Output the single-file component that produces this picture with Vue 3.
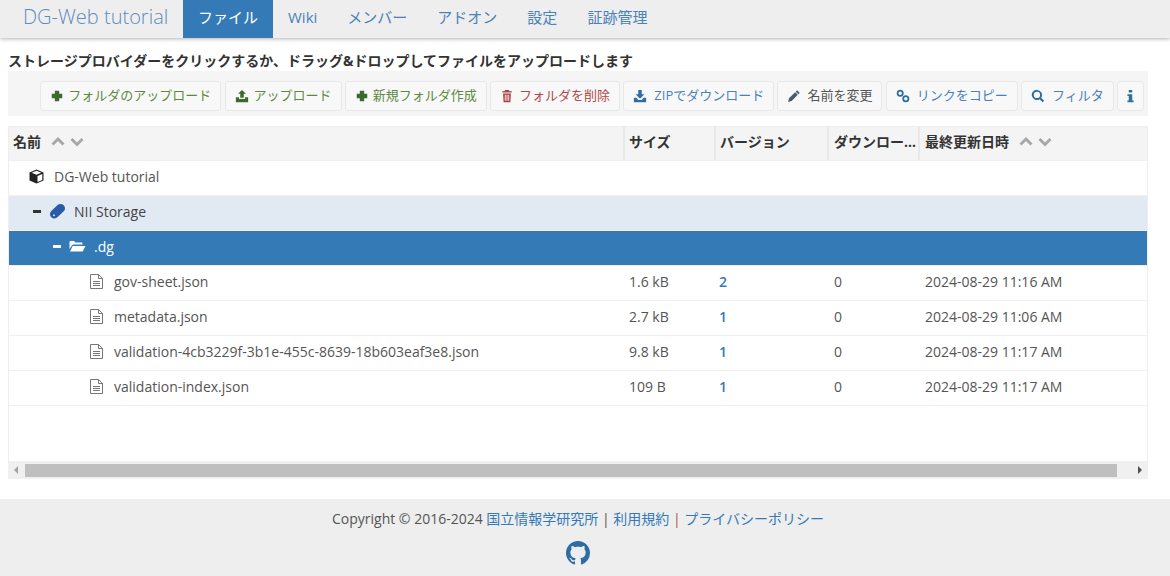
<template>
  <div class="page">
    <nav class="navbar">
      <a class="brand">DG-Web tutorial</a>
      <ul class="tabs">
        <li v-for="tab in tabs" :key="tab" :class="{ active: tab === 'ファイル' }">{{ tab }}</li>
      </ul>
    </nav>

    <main class="content">
      <p class="hint">ストレージプロバイダーをクリックするか、ドラッグ&amp;ドロップしてファイルをアップロードします</p>

      <div class="toolbar">
        <button v-for="btn in buttons" :key="btn.icon + btn.label" class="btn" :class="btn.kind">
          <svg
            class="btn-icon"
            :class="{ narrow: !btn.label }"
            :viewBox="btn.label ? '0 0 16 16' : '4 0 8 16'"
            :style="{ marginRight: btn.gap + 'px' }"
            aria-hidden="true"
          >
            <path :d="icons[btn.icon]" fill="currentColor" fill-rule="evenodd" />
          </svg>
          <span v-if="btn.label" class="btn-label">{{ btn.label }}</span>
        </button>
      </div>

      <section class="grid">
        <div class="row head">
          <div class="cell name">
            <b>名前</b>
            <svg class="sort" viewBox="0 0 32 12" aria-hidden="true">
              <path d="M1 9.500 6.500 4 12 9.500M20 4l5.500 5.500L31 4" fill="none" stroke="#a8a8a8" stroke-width="3" />
            </svg>
          </div>
          <div class="cell"><b>サイズ</b></div>
          <div class="cell"><b>バージョン</b></div>
          <div class="cell"><b class="clip">ダウンロード数</b></div>
          <div class="cell">
            <b>最終更新日時</b>
            <svg class="sort" viewBox="0 0 32 12" aria-hidden="true">
              <path d="M1 9.500 6.500 4 12 9.500M20 4l5.500 5.500L31 4" fill="none" stroke="#a8a8a8" stroke-width="3" />
            </svg>
          </div>
        </div>

        <div class="body">
          <div v-for="item in rows" :key="item.name" class="row" :class="item.kind">
            <div class="cell name" :class="'indent-' + item.depth">
              <span class="toggle"><i v-if="item.open"></i></span>
              <svg v-if="item.icon === 'cube'" class="tree-icon" viewBox="0 0 17 17" aria-hidden="true">
                <path d="M7.500 1.500 14.500 4.500v8L7.500 15.500.5 12.500v-8z" fill="#222" />
                <path d="M7.500 2.800 12.300 4.800 7.500 6.700 2.700 4.800zM8.500 8l4.800-2v6L8.500 14.100z" fill="#fff" />
              </svg>
              <svg v-else-if="item.icon === 'storage'" class="tree-icon" viewBox="0 0 17 17" aria-hidden="true">
                <path d="M11.500 1c2.500 0 4.500 1.900 4.500 4.200 0 1.200-.5 2.300-1.300 3l-6 5.900C7.800 15 6.700 15.500 5.400 15.500 2.900 15.500 1 13.600 1 11.200c0-1.200.5-2.300 1.300-3.100l6-5.800C9.200 1.500 10.300 1 11.500 1z" fill="#2a5aa8" />
                <circle cx="5" cy="12.300" r=".9" fill="#fff" />
              </svg>
              <svg v-else-if="item.icon === 'folder'" class="tree-icon" viewBox="0 0 17 17" aria-hidden="true">
                <path d="M.5 4c0-.5.5-1 1-1h3.700l1 1.500h6.300c.5 0 1 .5 1 1v1H4.700c-.8 0-1.400.4-1.800 1L.5 11zM3.700 8H16.500l-2.800 5.500H1z" fill="#fff" />
              </svg>
              <svg v-else class="tree-icon file" viewBox="0 0 17 17" aria-hidden="true">
                <path d="M1.500 1.500h8L13.500 5.500v10h-12zM9.500 1.500v4h4M4 8.500h7M4 10.500h7M4 12.500h7" fill="none" stroke="#777" stroke-width="1" />
              </svg>
              <span class="label">{{ item.name }}</span>
            </div>
            <div class="cell">{{ item.size }}</div>
            <div class="cell version">{{ item.version }}</div>
            <div class="cell">{{ item.downloads }}</div>
            <div class="cell">{{ item.modified }}</div>
          </div>
        </div>

        <div class="scrollbar">
          <span class="arrow left"></span>
          <div class="thumb"></div>
          <span class="arrow right"></span>
        </div>
      </section>
    </main>

    <footer class="footer">
      <p>
        Copyright © 2016-2024 <a>国立情報学研究所</a> | <a>利用規約</a> <span class="sep">|</span> <a>プライバシーポリシー</a>
      </p>
      <svg class="github" viewBox="0 0 16 16" aria-hidden="true">
        <path fill="#2f6ca3" d="M8 0C3.580 0 0 3.580 0 8c0 3.540 2.290 6.530 5.470 7.590.4.070.550-.170.550-.380 0-.190-.010-.820-.010-1.490-2.010.370-2.530-.490-2.690-.940-.090-.230-.480-.940-.820-1.130-.280-.150-.680-.520-.010-.530.630-.010 1.080.580 1.230.820.720 1.210 1.870.870 2.330.660.070-.520.280-.870.510-1.070-1.780-.2-3.640-.890-3.640-3.950 0-.870.310-1.590.820-2.150-.080-.2-.360-1.020.080-2.120 0 0 .670-.210 2.200.820.640-.180 1.320-.270 2-.270s1.360.090 2 .270c1.530-1.040 2.200-.820 2.200-.820.440 1.100.160 1.920.080 2.120.510.560.820 1.270.820 2.150 0 3.070-1.870 3.750-3.650 3.950.290.250.540.730.540 1.480 0 1.070-.010 1.930-.010 2.200 0 .210.150.460.550.380A8.013 8.013 0 0 0 16 8c0-4.420-3.580-8-8-8z" />
      </svg>
    </footer>
  </div>
</template>

<script setup>
const tabs = ['ファイル', 'Wiki', 'メンバー', 'アドオン', '設定', '証跡管理'];

const icons = {
  plus: 'M5.500 2h5v3.500H14v5h-3.500V14h-5v-3.500H2v-5h3.500z',
  upload: 'M8 1l4.500 4.500H10V10H6V5.500H3.500zM1 9.500h3.500V11.500h7V9.500H15V15H1z',
  download: 'M6 1h4v5h3L8 11 3 6h3zM1 10h3l2 2.500h4l2-2.500h3v5H1z',
  trash: 'M6 1h4l1 1.500h2.500V4h-11V2.500H5zM3.500 5h9l-.6 10H4.100zM5.500 6.500v7h1v-7zM7.500 6.500v7h1v-7zM9.500 6.500v7h1v-7z',
  pencil: 'M11.500 1.500l3 3L13 6l-3-3zM9.300 3.700l3 3-7 7-4 1.100 1-4.100z',
  link: 'M4.800.8a4 4 0 1 0 0 8 4 4 0 0 0 0-8zm0 2a2 2 0 1 1 0 4 2 2 0 0 1 0-4zM11.200 7.200a4 4 0 1 0 0 8 4 4 0 0 0 0-8zm0 2a2 2 0 1 1 0 4 2 2 0 0 1 0-4z',
  search: 'M6.800 1a5.800 5.800 0 0 1 4.800 9l3.400 3.400-1.700 1.600-3.400-3.400A5.800 5.800 0 1 1 6.800 1zm0 2.200a3.600 3.600 0 1 0 0 7.200 3.600 3.600 0 0 0 0-7.200z',
  info: 'M6 1h4v3H6zM4.500 6H10v7h1.500v2h-7v-2H6V8H4.500z'
};

const buttons = [
  { label: 'フォルダのアップロード', icon: 'plus', kind: 'success', gap: 4 },
  { label: 'アップロード', icon: 'upload', kind: 'success', gap: 5 },
  { label: '新規フォルダ作成', icon: 'plus', kind: 'success', gap: 4 },
  { label: 'フォルダを削除', icon: 'trash', kind: 'danger', gap: 5 },
  { label: 'ZIPでダウンロード', icon: 'download', kind: 'primary', gap: 7 },
  { label: '名前を変更', icon: 'pencil', kind: 'dark', gap: 6 },
  { label: 'リンクをコピー', icon: 'link', kind: 'primary', gap: 7 },
  { label: 'フィルタ', icon: 'search', kind: 'primary', gap: 7 },
  { label: '', icon: 'info', kind: 'info', gap: 0 }
];

const rows = [
  { name: 'DG-Web tutorial', icon: 'cube', depth: 0 },
  { name: 'NII Storage', icon: 'storage', depth: 1, open: true, kind: 'hover' },
  { name: '.dg', icon: 'folder', depth: 2, open: true, kind: 'selected' },
  { name: 'gov-sheet.json', icon: 'file', depth: 3, size: '1.6 kB', version: 2, downloads: 0, modified: '2024-08-29 11:16 AM' },
  { name: 'metadata.json', icon: 'file', depth: 3, size: '2.7 kB', version: 1, downloads: 0, modified: '2024-08-29 11:06 AM' },
  { name: 'validation-4cb3229f-3b1e-455c-8639-18b603eaf3e8.json', icon: 'file', depth: 3, size: '9.8 kB', version: 1, downloads: 0, modified: '2024-08-29 11:17 AM' },
  { name: 'validation-index.json', icon: 'file', depth: 3, size: '109 B', version: 1, downloads: 0, modified: '2024-08-29 11:17 AM' }
];
</script>

<style>
body {
  margin: 0;
  background: #fff;
}
</style>

<style scoped>
.page {
  width: 1170px;
  height: 576px;
  overflow: hidden;
  display: flex;
  flex-direction: column;
  font-family: 'Open Sans', 'Noto Sans CJK JP', sans-serif;
  font-size: 14px;
  color: #555;
}

.navbar {
  height: 38px;
  flex: none;
  display: flex;
  background: #eee;
  box-shadow: 0 1px 4px rgba(0, 0, 0, 0.3);
}

.brand {
  width: 183px;
  padding-left: 23px;
  box-sizing: border-box;
  font-size: 20px;
  font-weight: 300;
  line-height: 34px;
  white-space: nowrap;
  color: #5f8cc0;
}

.tabs {
  display: flex;
  margin: 0;
  padding: 0;
  list-style: none;
}

.tabs li {
  padding: 0 15px;
  font-size: 15px;
  line-height: 35px;
  color: #4a82b8;
}

.tabs li.active {
  background: #337ab7;
  color: #fff;
}

.content {
  flex: 1;
  padding: 0 22px 0 8px;
}

.hint {
  margin: 13px 0 0;
  height: 20px;
  line-height: 20px;
  font-size: 14px;
  font-weight: 700;
  color: #333;
}

.toolbar {
  height: 45px;
  box-sizing: border-box;
  padding: 10px 4px 0 0;
  display: flex;
  justify-content: flex-end;
  gap: 3.250px;
  background: #f5f5f5;
}

.btn {
  height: 30px;
  margin: 0;
  padding: 0 9px;
  display: flex;
  align-items: center;
  border: 1px solid #e8e8e8;
  border-radius: 3px;
  background: #f8f8f8;
  font-family: inherit;
  font-size: 13px;
  white-space: nowrap;
}

.btn-icon {
  width: 14px;
  height: 14px;
  flex: none;
}

.btn-icon.narrow {
  width: 7px;
}

.btn-label {
  position: relative;
  top: -2px;
}

.btn.success { color: #5d8a3e; }
.btn.success .btn-icon { color: #3b6b2c; }
.btn.danger { color: #b04a4a; }
.btn.danger .btn-icon { color: #a94442; }
.btn.primary { color: #4a82b8; }
.btn.primary .btn-icon { color: #2f6ca3; }
.btn.dark { color: #555; }
.btn.dark .btn-icon { color: #4a5a68; }
.btn.info .btn-icon { color: #31708f; }

.grid {
  width: 1140px;
  margin-top: 10px;
  box-sizing: border-box;
  border: 1px solid #eee;
  border-bottom: none;
}

.row {
  height: 35px;
  display: grid;
  grid-template-columns: 616px 91px 113px 91px 1fr;
  box-sizing: border-box;
  border-bottom: 1px solid #f0f0f0;
}

.row.head {
  height: 34px;
  background: #f4f4f4;
  border-bottom: 1px solid #eee;
  color: #333;
}

.head .cell {
  padding-bottom: 6px;
  border-right: 2px solid #e8e8e8;
}

.head .cell:last-child {
  border-right: none;
}

.head b {
  font-weight: 700;
  font-size: 14px;
}

.sort {
  width: 33px;
  height: 12px;
  margin-left: 10px;
  flex: none;
}

.clip {
  overflow: hidden;
  white-space: nowrap;
  text-overflow: ellipsis;
}

.cell {
  min-width: 0;
  box-sizing: border-box;
  display: flex;
  align-items: center;
  padding-left: 4px;
  padding-bottom: 4px;
  white-space: nowrap;
}

.cell:nth-child(4),
.cell:nth-child(5) {
  padding-left: 5px;
}

.body {
  height: 300px;
}

.row.hover {
  background: #e1eaf3;
}

.row.hover .label {
  color: #444;
}

.row.selected {
  background: #337ab7;
  color: #fff;
}

.indent-0 { padding-left: 4px; }
.indent-1 { padding-left: 24px; }
.indent-2 { padding-left: 44px; }
.indent-3 { padding-left: 64px; }

.toggle {
  width: 16px;
  flex: none;
  display: flex;
}

.toggle i {
  width: 8px;
  height: 3px;
  background: currentColor;
}

.hover .toggle i {
  background: #333;
}

.tree-icon {
  width: 17px;
  height: 17px;
  margin-right: 8px;
  flex: none;
}

.version {
  padding-left: 3px;
  color: #337ab7;
  font-weight: 600;
}

.scrollbar {
  height: 18px;
  margin: 0 -1px;
  display: flex;
  align-items: center;
  background: #f0f0f0;
}

.arrow {
  width: 0;
  height: 0;
  border-top: 4px solid transparent;
  border-bottom: 4px solid transparent;
}

.arrow.left {
  margin: 0 7px 0 6px;
  border-right: 4px solid #a3a3a3;
}

.arrow.right {
  margin-left: 21px;
  border-left: 4px solid #505050;
}

.thumb {
  width: 1092px;
  height: 13px;
  background: #bfbfbf;
}

.footer {
  height: 77px;
  flex: none;
  box-sizing: border-box;
  padding: 10px 14px 0 0;
  display: flex;
  flex-direction: column;
  align-items: center;
  background: #eee;
  color: #555;
}

.footer p {
  margin: 0;
  line-height: 20px;
}

.footer a {
  color: #337ab7;
}

.sep {
  color: #b05050;
}

.github {
  width: 24px;
  height: 24px;
  margin-top: 12px;
}
</style>
